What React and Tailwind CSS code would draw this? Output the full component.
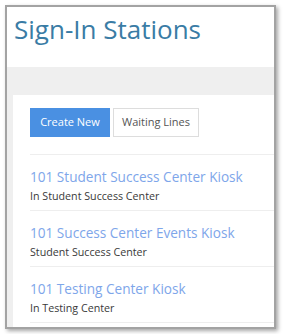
const stations = [
  { name: '101 Student Success Center Kiosk', place: 'In Student Success Center' },
  { name: '101 Success Center Events Kiosk', place: 'Student Success Center' },
  { name: '101 Testing Center Kiosk', place: 'In Testing Center' },
];

export default function App() {
  return (
    <div className="w-[284px] h-[334px] bg-white overflow-hidden font-['Open_Sans',sans-serif]">
      <div className="ml-[5px] mt-[5px] w-[271px] h-[324px] border-2 border-[#a3a3a3] shadow-[2px_2px_4px_rgba(0,0,0,0.35)] overflow-hidden flex flex-col">
        <div className="h-[60px] shrink-0 bg-white pl-[7px] pt-[5px]">
          <h1 className="text-[26px] leading-[34px] text-[#3a7ca5]">Sign-In Stations</h1>
        </div>
        <div className="flex-1 bg-[#efefef] pl-[6px] pt-[28px]">
          <div className="h-full bg-white pl-[17px] pt-[13px]">
            <div className="flex gap-[3px]">
              <button className="h-[29px] w-[80px] bg-[#4a90e2] text-white text-[11px]">
                Create New
              </button>
              <button className="h-[29px] w-[86px] bg-white border border-[#dddddd] text-[#555] text-[11px]">
                Waiting Lines
              </button>
            </div>
            <div className="mt-[17px] border-t border-[#eeeeee]">
              {stations.map((s) => (
                <div key={s.name} className="h-[56px] border-b border-[#eeeeee] pt-[12px]">
                  <div className="text-[13.6px] leading-[20px] text-[#7ea6ea] whitespace-nowrap">{s.name}</div>
                  <div className="text-[10.7px] leading-[18px] text-[#3a3a3a]">{s.place}</div>
                </div>
              ))}
            </div>
          </div>
        </div>
      </div>
    </div>
  );
}
